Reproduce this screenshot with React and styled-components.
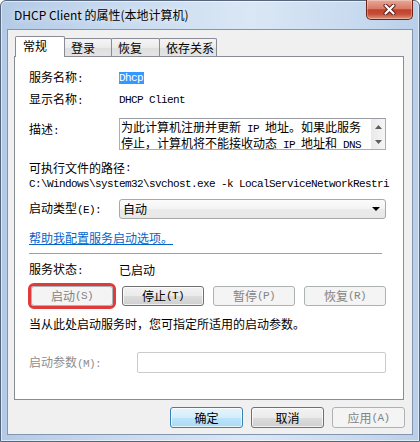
import React from "react";
import styled, { createGlobalStyle } from "styled-components";

const GlobalStyle = createGlobalStyle`
  html, body {
    margin: 0;
    padding: 0;
  }
  body {
    width: 420px;
    height: 442px;
    overflow: hidden;
    background: #fff;
    font-family: "Noto Sans CJK SC", "Noto Sans", sans-serif;
    font-size: 12px;
    line-height: 16px;
    color: #000;
  }
  * {
    box-sizing: border-box;
  }
`;

const Window = styled.div`
  width: 420px;
  height: 442px;
  display: flex;
  flex-direction: column;
  padding: 0 6px 6px;
  border: 1px solid #56677d;
  border-radius: 6px 6px 0 0;
  background: linear-gradient(
    to right,
    #b3cae6 0%,
    #c9dbf0 30%,
    #dae7f5 60%,
    #c8daef 85%,
    #b9cfe9 100%
  );
  box-shadow: inset 0 0 0 1px rgba(255, 255, 255, 0.55);
`;

const TitleBar = styled.div`
  height: 28px;
  display: flex;
  align-items: center;
  padding-left: 7px;
`;

const Title = styled.div`
  font-family: "Noto Sans CJK SC", "Noto Sans", sans-serif;
  font-size: 12px;
  color: #000;
  text-shadow: 0 0 6px rgba(255, 255, 255, 0.9);
`;

const CloseButton = styled.div`
  width: 47px;
  height: 20px;
  margin-top: -1px;
  margin-left: auto;
  align-self: flex-start;
  display: flex;
  align-items: center;
  justify-content: center;
  border: 1px solid #6a2419;
  border-top: none;
  border-radius: 0 0 5px 5px;
  background: linear-gradient(
    #e9a898 0%,
    #d97a66 45%,
    #c2402a 52%,
    #c4503a 75%,
    #e29478 100%
  );
  box-shadow: inset 0 0 0 1px rgba(255, 255, 255, 0.3);
`;

const Client = styled.div`
  flex: 1;
  display: flex;
  flex-direction: column;
  padding: 6px 8px 6px 6px;
  background: #f0f0f0;
  border: 1px solid #8396ae;
`;

const TabStrip = styled.div`
  position: relative;
  z-index: 1;
  height: 20px;
  display: flex;
  align-items: flex-end;
  margin-left: 1px;
`;

const Tab = styled.div`
  position: relative;
  z-index: ${(p) => (p.$active ? 2 : 1)};
  display: flex;
  align-items: center;
  width: ${(p) => p.$w}px;
  height: ${(p) => (p.$active ? 21 : 18)}px;
  margin-left: ${(p) => (p.$first ? 0 : -1)}px;
  margin-bottom: ${(p) => (p.$active ? -1 : 0)}px;
  padding: ${(p) => (p.$active ? "0 0 2px 7px" : "0 0 0 6px")};
  border: 1px solid #898c95;
  border-bottom: none;
  border-radius: 2px 2px 0 0;
  background: ${(p) =>
    p.$active
      ? "#fff"
      : "linear-gradient(#f5f5f5 0%, #ebebeb 50%, #dfdfdf 51%, #e4e4e4 100%)"};
  white-space: nowrap;
`;

const Panel = styled.div`
  height: 344px;
  display: flex;
  flex-direction: column;
  padding: 13px 17px 0 14px;
  background: #fff;
  border: 1px solid #898c95;
`;

const Row = styled.div`
  display: flex;
  align-items: ${(p) => p.$align || "center"};
  height: ${(p) => p.$h}px;
  margin-top: ${(p) => p.$mt}px;
  white-space: nowrap;
`;

const Label = styled.div`
  flex: none;
  width: ${(p) => p.$w || 90}px;
  padding-top: ${(p) => p.$pt || 0}px;
  color: ${(p) => (p.$disabled ? "#8d8d8d" : "#000")};
`;

const Mono = styled.span`
  font-family: "Liberation Mono", "DejaVu Sans Mono", monospace;
  font-size: 11px;
  letter-spacing: -0.6px;
  white-space: pre;
`;

const Selected = styled(Mono)`
  display: inline-block;
  height: 12px;
  line-height: 12px;
  padding: 0 1px 0 0;
  background: #3399ff;
  color: #fff;
`;

const TextBox = styled.div`
  width: 267px;
  height: 32px;
  display: flex;
  border: 1px solid #abadb3;
  border-top-color: #9a9ca3;
  background: #fff;
`;

const TextLines = styled.div`
  flex: 1;
  padding: 1px 0 0 1px;
  line-height: 13px;
`;

const ScrollBar = styled.div`
  width: 14px;
  display: flex;
  flex-direction: column;
  background: linear-gradient(to right, #e9e9e9, #f5f5f5);
`;

const ScrollArrow = styled.div`
  flex: 1;
  display: flex;
  align-items: center;
  justify-content: center;
`;

const Combo = styled.div`
  width: 267px;
  height: 20px;
  display: flex;
  align-items: center;
  justify-content: space-between;
  padding: 0 5px 0 3px;
  border: 1px solid #a8a8a8;
  border-radius: 3px;
  background: linear-gradient(#fbfbfb 0%, #f3f3f3 50%, #ebebeb 51%, #e8e8e8 100%);
`;

const Link = styled.a`
  color: #0066cc;
  text-decoration: underline;
  cursor: pointer;
`;

const Separator = styled.div`
  height: 1px;
  margin-top: 7px;
  margin-right: 4px;
  background: #a0a0a0;
`;

const ButtonRow = styled.div`
  display: flex;
  justify-content: space-between;
  height: 20px;
  margin-top: 8px;
  padding-left: 2px;
`;

const Button = styled.div`
  width: ${(p) => p.$w}px;
  height: ${(p) => p.$h || 20}px;
  display: flex;
  align-items: center;
  justify-content: center;
  border: 1px solid ${(p) => (p.$disabled ? "#adb2b5" : p.$default ? "#3c7fb1" : "#707070")};
  border-radius: 3px;
  color: ${(p) => (p.$disabled ? "#838383" : "#000")};
  background: ${(p) =>
    p.$disabled
      ? "#f4f4f4"
      : p.$default
      ? "linear-gradient(#e5f4fc 0%, #d4edfb 50%, #bde4fa 51%, #a9daf6 100%)"
      : "linear-gradient(#f2f2f2 0%, #ebebeb 50%, #dddddd 51%, #cfcfcf 100%)"};
  box-shadow: ${(p) =>
    p.$disabled ? "none" : "inset 0 0 0 1px rgba(255, 255, 255, 0.7)"};
  outline: ${(p) => (p.$marked ? "3px solid #e03b3b" : "none")};
  white-space: nowrap;
`;

const Input = styled.div`
  width: 249px;
  height: 21px;
  border: 1px solid #c9cbcf;
  border-radius: 2px;
  background: #fff;
`;

const Footer = styled.div`
  display: flex;
  justify-content: flex-end;
  gap: 8px;
  margin-top: 7px;
  margin-right: -1px;
`;

function Arrow({ up }) {
  return (
    <svg width="7" height="4" viewBox="0 0 7 4">
      <polygon
        points={up ? "0,4 3.5,0 7,4" : "0,0 7,0 3.5,4"}
        fill="#5e5e5e"
      />
    </svg>
  );
}

const tabs = [
  { name: "常规", w: 50 },
  { name: "登录", w: 48 },
  { name: "恢复", w: 49 },
  { name: "依存关系", w: 58 },
];

export default function App() {
  return (
    <>
      <GlobalStyle />
      <Window>
        <TitleBar>
          <Title>DHCP Client 的属性(本地计算机)</Title>
          <CloseButton>
            <svg width="13" height="11" viewBox="0 0 13 11">
              <path
                d="M2.5 1.5 L10.5 9.5 M10.5 1.5 L2.5 9.5"
                stroke="#5a1c14"
                strokeWidth="4"
                strokeLinecap="round"
              />
              <path
                d="M2.5 1.5 L10.5 9.5 M10.5 1.5 L2.5 9.5"
                stroke="#fff"
                strokeWidth="2.2"
                strokeLinecap="round"
              />
            </svg>
          </CloseButton>
        </TitleBar>

        <Client>
          <TabStrip>
            {tabs.map((t, i) => (
              <Tab key={t.name} $w={t.w} $first={i === 0} $active={i === 0}>
                {t.name}
              </Tab>
            ))}
          </TabStrip>

          <Panel>
            <Row $mt={0} $h={16}>
              <Label>
                服务名称<Mono>:</Mono>
              </Label>
              <Selected>Dhcp</Selected>
            </Row>
            <Row $mt={6} $h={16}>
              <Label>
                显示名称<Mono>:</Mono>
              </Label>
              <Mono>DHCP Client</Mono>
            </Row>
            <Row $mt={10} $h={32} $align="flex-start">
              <Label $pt={3}>
                描述<Mono>:</Mono>
              </Label>
              <TextBox>
                <TextLines>
                  <div>
                    为此计算机注册并更新<Mono> IP </Mono>地址。如果此服务
                  </div>
                  <div>
                    停止，计算机将不能接收动态<Mono> IP </Mono>地址和
                    <Mono> DNS</Mono>
                  </div>
                </TextLines>
                <ScrollBar>
                  <ScrollArrow>
                    <Arrow up />
                  </ScrollArrow>
                  <ScrollArrow>
                    <Arrow />
                  </ScrollArrow>
                </ScrollBar>
              </TextBox>
            </Row>
            <Row $mt={10} $h={16}>
              可执行文件的路径<Mono>:</Mono>
            </Row>
            <Row $mt={1} $h={14}>
              <Mono>C:\Windows\system32\svchost.exe -k LocalServiceNetworkRestri</Mono>
            </Row>
            <Row $mt={8} $h={20}>
              <Label>
                启动类型<Mono>(E):</Mono>
              </Label>
              <Combo>
                <span>自动</span>
                <svg width="8" height="4" viewBox="0 0 8 4">
                  <polygon points="0,0 8,0 4,4" fill="#000" />
                </svg>
              </Combo>
            </Row>
            <Row $mt={11} $h={16}>
              <Link>帮助我配置服务启动选项。</Link>
            </Row>
            <Separator />
            <Row $mt={8} $h={16}>
              <Label>
                服务状态<Mono>:</Mono>
              </Label>
              已启动
            </Row>
            <ButtonRow>
              <Button $w={82} $disabled $marked>
                启动<Mono>(S)</Mono>
              </Button>
              <Button $w={82}>
                停止<Mono>(T)</Mono>
              </Button>
              <Button $w={82} $disabled>
                暂停<Mono>(P)</Mono>
              </Button>
              <Button $w={82} $disabled>
                恢复<Mono>(R)</Mono>
              </Button>
            </ButtonRow>
            <Row $mt={10} $h={16}>
              当从此处启动服务时，您可指定所适用的启动参数。
            </Row>
            <Row $mt={20} $h={21}>
              <Label $w={108} $disabled>
                启动参数<Mono>(M):</Mono>
              </Label>
              <Input />
            </Row>
          </Panel>

          <Footer>
            <Button $w={73} $h={21} $default>
              确定
            </Button>
            <Button $w={73} $h={21}>
              取消
            </Button>
            <Button $w={73} $h={21} $disabled>
              应用<Mono>(A)</Mono>
            </Button>
          </Footer>
        </Client>
      </Window>
    </>
  );
}
